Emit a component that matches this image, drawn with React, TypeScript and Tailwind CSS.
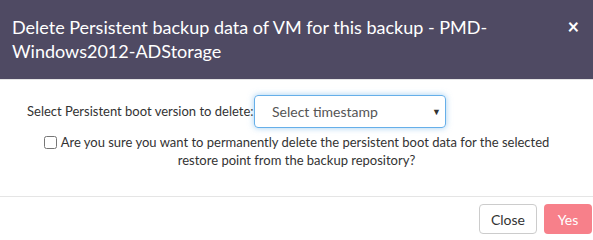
export default function App() {
  return (
    <div className="w-[593px] h-[240px] bg-white overflow-hidden" style={{ fontFamily: "Lato, 'Open Sans', sans-serif" }}>
      <div className="h-[80px] bg-[#4f4a63] border-b border-[#e5e5e5] flex items-start pl-[12px] pr-[14px] pt-[15px]">
        <div className="flex-1 text-white text-[18px] leading-[24px]">
          Delete Persistent backup data of VM for this backup - PMD-<br />Windows2012-ADStorage
        </div>
        <div className="text-white text-[20px] font-bold leading-[24px] -mt-[1px]">×</div>
      </div>
      <div className="h-[117px] border-b border-[#e5e5e5] flex flex-col pt-[15px]">
        <div className="flex items-center pl-[27px]">
          <span className="text-[13px] text-[#333] w-[227px]">Select Persistent boot version to delete:</span>
          <div className="w-[192px] h-[33px] border border-[#66afe9] rounded-[4px] shadow-[0_0_6px_rgba(102,175,233,0.6)] flex items-center pl-[17px] pr-[4px] text-[14px] text-[#555]">
            <span className="flex-1">Select timestamp</span>
            <span className="text-[9px] text-[#333]">▼</span>
          </div>
        </div>
        <div className="mt-[5px] self-center text-[13px] leading-[18px] text-[#333] text-center w-[510px]">
          <input type="checkbox" className="w-[13px] h-[13px] align-[-2px] mr-[4px]" />
          Are you sure you want to permanently delete the persistent boot data for the selected restore point from the backup repository?
        </div>
      </div>
      <div className="flex justify-end gap-[7px] pr-[1px] pt-[7px]">
        <button className="h-[30px] px-[11px] border border-[#ccc] rounded-[4px] text-[14px] text-[#333] bg-white">Close</button>
        <button className="h-[30px] w-[48px] rounded-[4px] text-[14px] text-white bg-[#f7808a]">Yes</button>
      </div>
    </div>
  );
}
